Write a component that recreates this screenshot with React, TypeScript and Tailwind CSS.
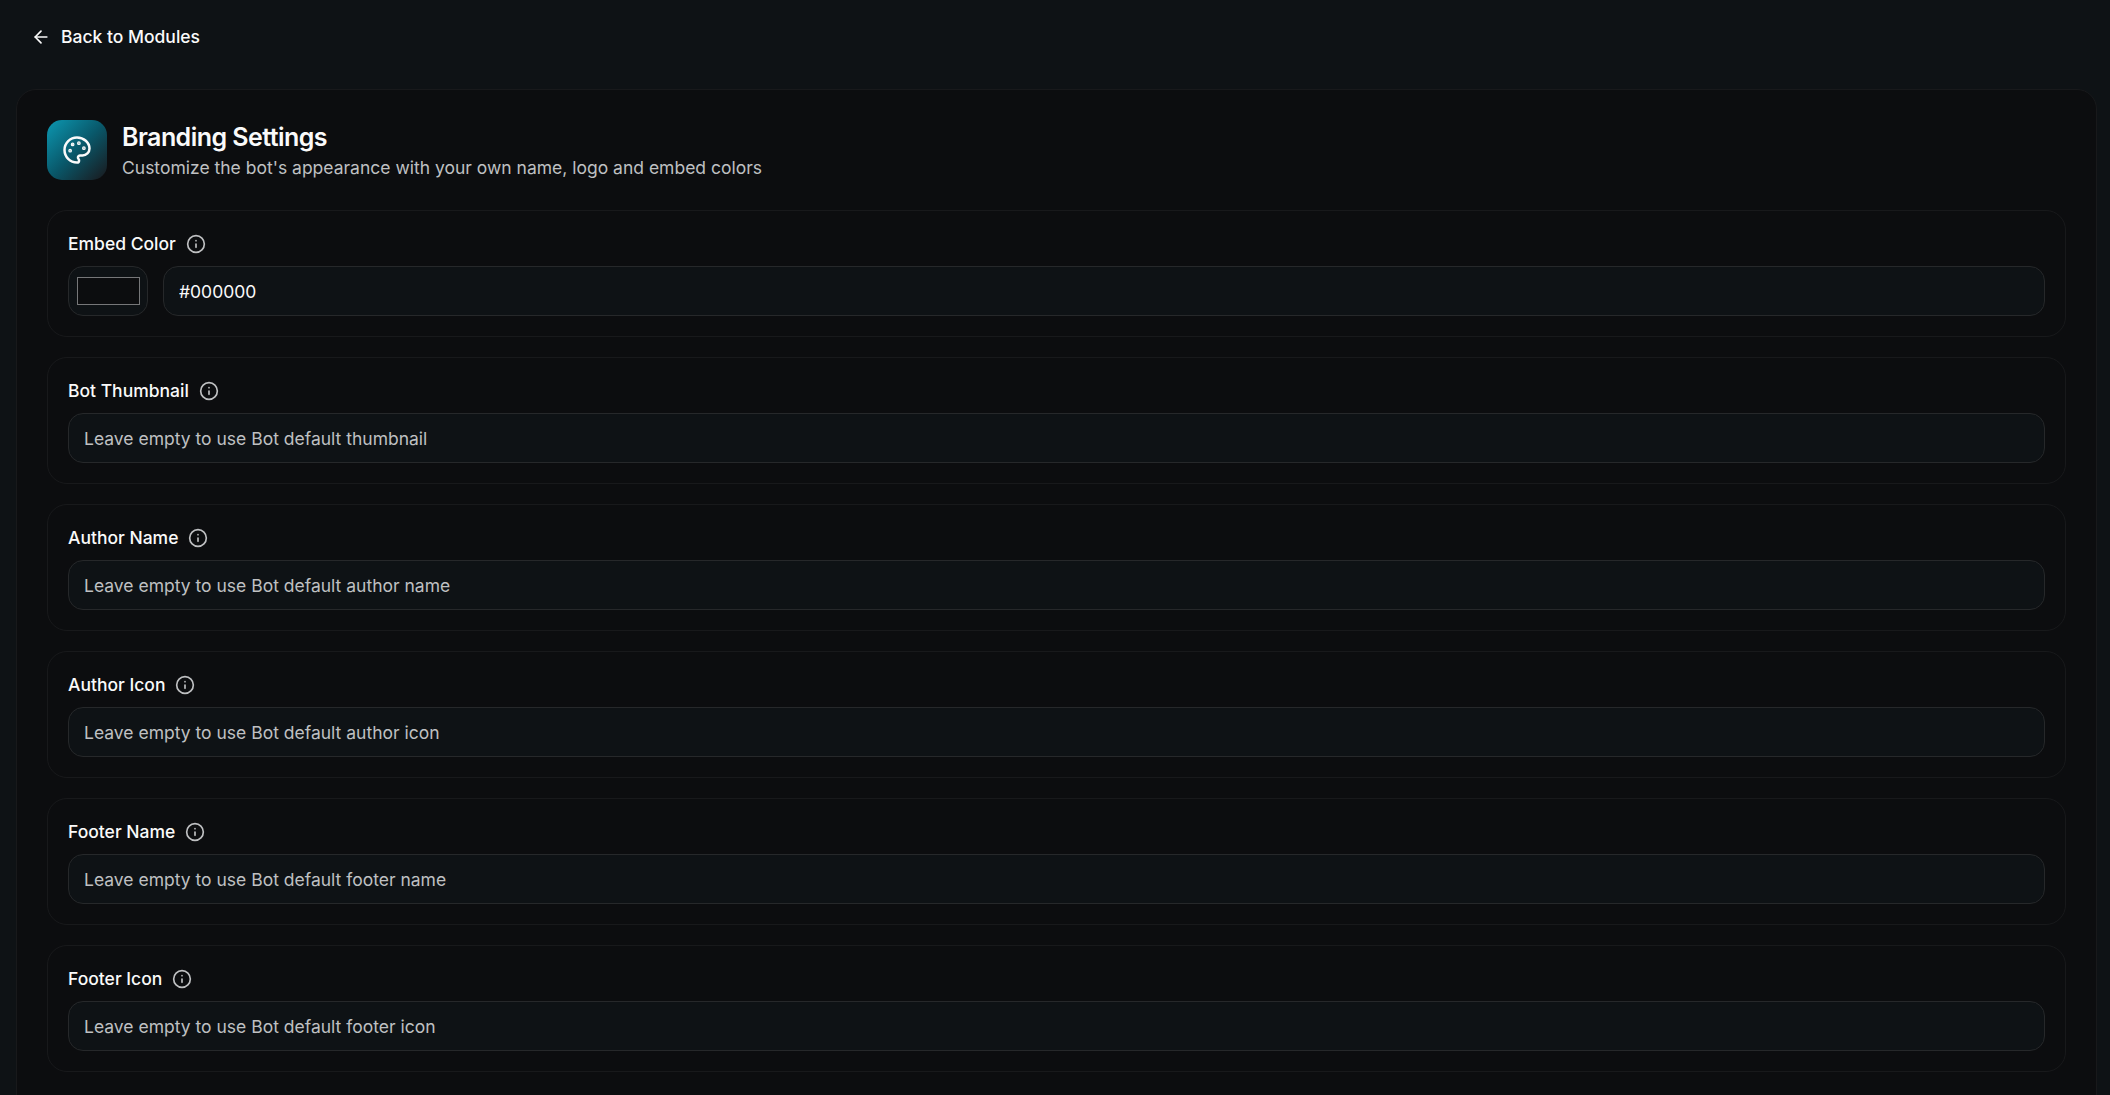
import { ReactNode } from "react";
import { ArrowLeft, Info } from "lucide-react";

const textFields = [
  { label: "Bot Thumbnail", placeholder: "Leave empty to use Bot default thumbnail" },
  { label: "Author Name", placeholder: "Leave empty to use Bot default author name" },
  { label: "Author Icon", placeholder: "Leave empty to use Bot default author icon" },
  { label: "Footer Name", placeholder: "Leave empty to use Bot default footer name" },
  { label: "Footer Icon", placeholder: "Leave empty to use Bot default footer icon" }
];

const inputClass =
  "block h-[50px] w-full min-w-0 rounded-[15px] border border-[#26282a] bg-[#0e1215] px-[15px] pt-px text-[17.5px] text-[#fafafa] outline-none placeholder:text-[#bfc0c2] placeholder:opacity-100";

function PaletteIcon({ className }: { className?: string }) {
  return (
    <svg
      viewBox="0 0 24 24"
      fill="none"
      stroke="currentColor"
      strokeWidth="2"
      strokeLinecap="round"
      strokeLinejoin="round"
      className={className}
    >
      <circle cx="13.5" cy="6.5" r=".5" fill="currentColor" />
      <circle cx="17.5" cy="10.5" r=".5" fill="currentColor" />
      <circle cx="8.5" cy="7.5" r=".5" fill="currentColor" />
      <circle cx="6.5" cy="12.5" r=".5" fill="currentColor" />
      <path d="M12 2C6.5 2 2 6.5 2 12s4.5 10 10 10c.926 0 1.648-.746 1.648-1.688 0-.437-.18-.835-.437-1.125-.29-.289-.438-.652-.438-1.125a1.64 1.64 0 0 1 1.668-1.668h1.996c3.051 0 5.555-2.503 5.555-5.554C21.965 6.012 17.461 2 12 2z" />
    </svg>
  );
}

function FieldCard({ label, children }: { label: string; children: ReactNode }) {
  return (
    <section className="rounded-[20px] border border-[#18191b] p-5">
      <div className="mb-2.5 flex h-[25px] items-center gap-2.5">
        <label className="text-[17.5px] leading-[25px] font-medium text-[#fafafa]">{label}</label>
        <Info className="size-5 text-[#bfc0c2]" />
      </div>
      {children}
    </section>
  );
}

export default function App() {
  return (
    <div className="h-screen overflow-hidden bg-[#0e1215] pr-[13px] pl-4 font-['Inter',sans-serif] text-[#fafafa]">
      <header className="flex h-[89px] items-start pt-6 pl-[15px]">
        <button type="button" className="flex items-center gap-2.5 text-[17.5px] leading-[25px] font-medium">
          <ArrowLeft className="size-5" />
          Back to Modules
        </button>
      </header>

      <main className="h-[1100px] rounded-[20px] border border-[#18191b] bg-[#0c0d0f] p-[30px]">
        <div className="mb-[30px] flex items-center gap-[15px]">
          <div className="flex size-[60px] items-center justify-center rounded-[15px] bg-linear-to-br/srgb from-[#0c98b2] via-[#09586a] to-[#1a181c]">
            <PaletteIcon className="size-[30px]" />
          </div>
          <div>
            <h1 className="text-[25px] leading-[35px] font-semibold tracking-[-0.022em]">Branding Settings</h1>
            <p className="text-[17.5px] leading-[25px] text-[#bfc0c2]">
              Customize the bot's appearance with your own name, logo and embed colors
            </p>
          </div>
        </div>

        <div className="space-y-5">
          <FieldCard label="Embed Color">
            <div className="flex gap-[15px]">
              <div className="h-[50px] w-20 shrink-0 rounded-[15px] border border-[#26282a] bg-[#0e1215] py-2.5 pr-[7px] pl-2">
                <div className="h-full border border-[#767779] bg-[#0c0d0f]" />
              </div>
              <input className={inputClass} defaultValue="#000000" />
            </div>
          </FieldCard>
          {textFields.map((field) => (
            <FieldCard key={field.label} label={field.label}>
              <input className={inputClass} placeholder={field.placeholder} />
            </FieldCard>
          ))}
        </div>
      </main>
    </div>
  );
}
